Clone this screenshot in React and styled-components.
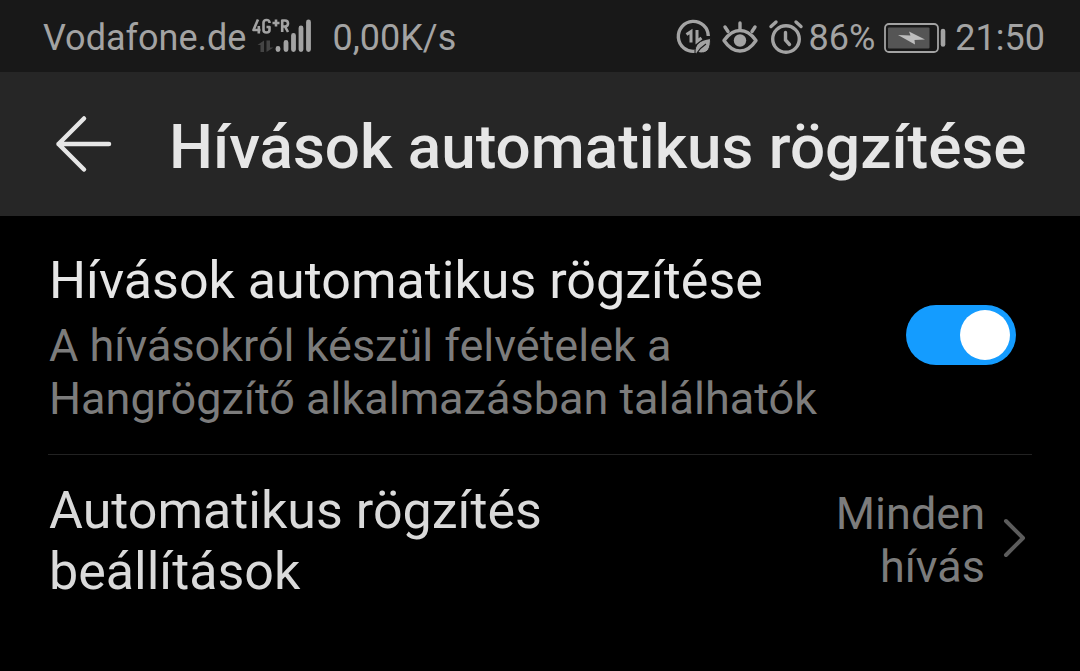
import React, { useState } from 'react';
import styled, { createGlobalStyle } from 'styled-components';

const GlobalStyle = createGlobalStyle`
  * { box-sizing: border-box; }
  body {
    margin: 0;
    background: #000;
    font-family: Roboto, "Noto Sans", sans-serif;
  }
`;

const Screen = styled.div`
  min-height: 100vh;
  background: #000;
`;

const StatusBar = styled.div`
  display: flex;
  align-items: center;
  justify-content: space-between;
  height: 72px;
  padding: 4px 35px 0 43px;
  background: #181818;
  color: #a3a3a3;
  font-size: 36px;
  line-height: 44px;
  white-space: nowrap;
`;

const StatusGroup = styled.div`
  display: flex;
  align-items: center;
  gap: ${(p) => p.$gap}px;
`;

const Icon = styled.svg`
  display: block;
  flex: none;
  overflow: visible;
`;

const SpeedText = styled.span`
  margin-left: 14px;
`;

const Header = styled.header`
  display: flex;
  align-items: center;
  gap: 57px;
  height: 144px;
  padding: 0 48px 0 54px;
  background: #262626;
`;

const BackButton = styled.button`
  flex: none;
  padding: 0;
  border: 0;
  background: none;
  color: #e6e6e6;
  cursor: pointer;
`;

const PageTitle = styled.h1`
  margin: 0;
  padding-top: 6px;
  color: #e6e6e6;
  font-size: 62px;
  font-weight: 500;
  line-height: 72px;
  white-space: nowrap;
`;

const List = styled.main`
  padding: 0 48px;
`;

const SwitchRow = styled.label`
  display: flex;
  align-items: center;
  justify-content: space-between;
  padding: 0 16px 0 1px;
  border-bottom: 1px solid #222;
  cursor: pointer;
`;

const SwitchText = styled.span`
  padding: 34px 0 29px;
`;

const RowTitle = styled.span`
  display: block;
  color: ${(p) => (p.$dim ? '#dadada' : '#e6e6e6')};
  font-size: 52px;
  line-height: 61px;
  text-align: left;
`;

const Description = styled.span`
  display: block;
  margin-top: 8px;
  color: #7c7c7c;
  font-size: 45px;
  line-height: 53px;
`;

const Switch = styled.input`
  appearance: none;
  flex: none;
  display: flex;
  align-items: center;
  justify-content: ${(p) => (p.checked ? 'flex-end' : 'flex-start')};
  width: 110px;
  height: 60px;
  margin: 0;
  padding: 0 6px;
  border-radius: 30px;
  background: ${(p) => (p.checked ? '#149cff' : '#555')};
  cursor: pointer;

  &::before {
    content: '';
    width: 50px;
    height: 50px;
    border-radius: 50%;
    background: #fff;
  }
`;

const LinkRow = styled.button`
  display: flex;
  align-items: center;
  justify-content: space-between;
  width: 100%;
  padding: 25px 6px 24px 1px;
  border: 0;
  background: none;
  font-family: inherit;
  cursor: pointer;
`;

const Value = styled.span`
  display: flex;
  align-items: center;
  gap: 18px;
  padding-bottom: 2px;
  color: #7c7c7c;
  font-size: 45px;
  line-height: 53px;
  text-align: right;
`;

const SignalIcon = () => (
  <Icon width="60" height="38" viewBox="0 0 60 38" fill="none" stroke="#a3a3a3">
    <g strokeWidth="2.600" strokeLinejoin="round">
      <path d="M6 0.500L1.500 11H8.500M6.800 7V14.500" />
      <path d="M17.500 4V3.500Q17.500 1 14.500 1T11.500 3.500V11Q11.500 13.500 14.500 13.500T17.500 11V8H14.500" />
      <path d="M24 0.500V7.500M20.500 4H27.500" />
      <path d="M30.200 13V1.500H33Q36 1.500 36 4.500T33 7.500H30.200M33 7.500L36 13" />
    </g>
    <g fill="#444" stroke="none">
      <path d="M12 21.500V33H8.500V26H5.500Z" />
      <path d="M14.500 21.500H18V28.500H21.500L14.500 33Z" />
    </g>
    <path strokeWidth="4.800" strokeLinecap="round" d="M26 29.500V30.500M34 23.500V30.500M41.500 16.500V30.500M49 9V30.500M56.500 3V30.500" />
  </Icon>
);

const DataSaverIcon = () => (
  <Icon width="34" height="36" viewBox="0 0 34 36" fill="none" stroke="#a3a3a3">
    <path d="M18 31.300A15 15 0 1 1 31.300 16" strokeWidth="3.400" />
    <path d="M9.500 14.500L14 11.500V22.500M20 10V21.500L24.500 18" strokeWidth="3" />
    <path d="M33.500 18.500C33.500 28 31.500 33 24 33L21 32.500C19.500 33 19.500 33.500 19 34L18 33C17.500 24 23 20 33.500 18.500Z" fill="#a3a3a3" stroke="#181818" strokeWidth="1" />
    <path d="M20 33Q23 28 29 24" stroke="#181818" strokeWidth="1.200" />
  </Icon>
);

const EyeIcon = () => (
  <Icon width="36" height="36" viewBox="0 0 36 36" fill="none" stroke="#a3a3a3" strokeWidth="3.400" strokeLinecap="round">
    <path d="M2 20.500Q9 10.500 18 10.500T34 20.500Q27 31 18 31T2 20.500Z" strokeLinejoin="round" />
    <circle cx="18" cy="20.500" r="6.200" fill="#a3a3a3" stroke="none" />
    <path d="M18 3V9M3 7L6 11.500M33 7L30 11.500" />
  </Icon>
);

const AlarmIcon = () => (
  <Icon width="34" height="36" viewBox="0 0 34 36" fill="none" stroke="#a3a3a3" strokeWidth="3.400" strokeLinecap="round">
    <circle cx="17" cy="19" r="13.300" />
    <path d="M16.500 12.500V20L20.500 24.500M2 6.500L7 2M32 6.500L27 2" />
  </Icon>
);

const BatteryIcon = () => (
  <Icon width="62" height="30" viewBox="0 0 62 30" fill="none">
    <rect x="1" y="1" width="53" height="28" rx="4" stroke="#a3a3a3" strokeWidth="1.800" />
    <rect x="4" y="4.500" width="41.500" height="21" rx="1" fill="#555" />
    <path d="M14 12L26.500 12.500L25 8.500L41 16.500L30.500 17L31 21.500Z" fill="#bdbdbd" />
    <path d="M59 8V21.500" stroke="#a3a3a3" strokeWidth="4.600" strokeLinecap="round" />
  </Icon>
);

const BackArrow = () => (
  <Icon width="58" height="58" viewBox="0 0 58 58" fill="none" stroke="currentColor" strokeWidth="4.500" strokeLinecap="round" strokeLinejoin="round">
    <path d="M30 3.500L4.500 29L30 54.500M4.500 29H55" />
  </Icon>
);

const Chevron = () => (
  <Icon width="23" height="44" viewBox="0 0 23 44" fill="none" stroke="#5c5c5c" strokeWidth="4" strokeLinecap="round" strokeLinejoin="round">
    <path d="M3 3L20 20L3 37" />
  </Icon>
);

export default function App() {
  const [enabled, setEnabled] = useState(true);

  return (
    <Screen>
      <GlobalStyle />
      <StatusBar>
        <StatusGroup $gap={6}>
          <span>Vodafone.de</span>
          <SignalIcon />
          <SpeedText>0,00K/s</SpeedText>
        </StatusGroup>
        <StatusGroup $gap={6}>
          <StatusGroup $gap={11}>
            <DataSaverIcon />
            <EyeIcon />
            <AlarmIcon />
          </StatusGroup>
          <StatusGroup $gap={9}>
            <span>86%</span>
            <BatteryIcon />
            <span>21:50</span>
          </StatusGroup>
        </StatusGroup>
      </StatusBar>
      <Header>
        <BackButton type="button" aria-label="Vissza">
          <BackArrow />
        </BackButton>
        <PageTitle>Hívások automatikus rögzítése</PageTitle>
      </Header>
      <List>
        <SwitchRow htmlFor="auto-record">
          <SwitchText>
            <RowTitle>Hívások automatikus rögzítése</RowTitle>
            <Description>
              A hívásokról készül felvételek a<br />
              Hangrögzítő alkalmazásban találhatók
            </Description>
          </SwitchText>
          <Switch
            id="auto-record"
            type="checkbox"
            role="switch"
            checked={enabled}
            onChange={(e) => setEnabled(e.target.checked)}
          />
        </SwitchRow>
        <LinkRow type="button">
          <RowTitle $dim>
            Automatikus rögzítés<br />
            beállítások
          </RowTitle>
          <Value>
            <span>
              Minden<br />
              hívás
            </span>
            <Chevron />
          </Value>
        </LinkRow>
      </List>
    </Screen>
  );
}
